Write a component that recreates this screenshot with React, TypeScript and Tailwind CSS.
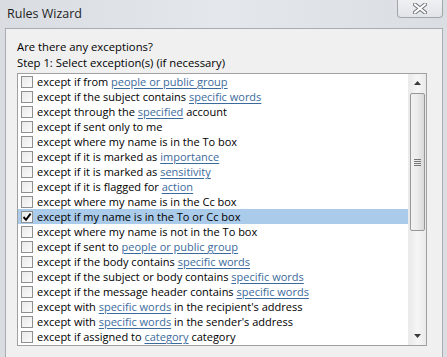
import React from 'react';

type Part = string | { link: string };

const rows: Part[][] = [
  ['except if from ', { link: 'people or public group' }],
  ['except if the subject contains ', { link: 'specific words' }],
  ['except through the ', { link: 'specified' }, ' account'],
  ['except if sent only to me'],
  ['except where my name is in the To box'],
  ['except if it is marked as ', { link: 'importance' }],
  ['except if it is marked as ', { link: 'sensitivity' }],
  ['except if it is flagged for ', { link: 'action' }],
  ['except where my name is in the Cc box'],
  ['except if my name is in the To or Cc box'],
  ['except where my name is not in the To box'],
  ['except if sent to ', { link: 'people or public group' }],
  ['except if the body contains ', { link: 'specific words' }],
  ['except if the subject or body contains ', { link: 'specific words' }],
  ['except if the message header contains ', { link: 'specific words' }],
  ['except with ', { link: 'specific words' }, " in the recipient's address"],
  ['except with ', { link: 'specific words' }, " in the sender's address"],
  ['except if assigned to ', { link: 'category' }, ' category'],
];

const CHECKED = 9;

const Checkbox: React.FC<{ checked?: boolean }> = ({ checked }) => (
  <div className="w-[12px] h-[12px] shrink-0 border border-[#8e8f8f] bg-gradient-to-br from-[#e9e9e9] to-[#fbfbfb] flex items-center justify-center">
    {checked && (
      <svg width="10" height="10" viewBox="0 0 10 10">
        <path d="M1.5 5 L4 7.8 L8.6 1.6" fill="none" stroke="#000" strokeWidth="1.9" />
      </svg>
    )}
  </div>
);

const Row: React.FC<{ parts: Part[]; index: number }> = ({ parts, index }) => (
  <div
    className={`h-[15px] flex items-center gap-[4px] pl-[3px] whitespace-nowrap text-[11px] ${
      index === CHECKED ? 'bg-[#aacbea]' : ''
    }`}
  >
    <Checkbox checked={index === CHECKED} />
    <span className="leading-[15px]">
      {parts.map((p, i) =>
        typeof p === 'string' ? (
          <span key={i}>{p}</span>
        ) : (
          <span key={i} className="text-[#3b6a9c] underline decoration-[#3b6a9c] underline-offset-[2px]">
            {p.link}
          </span>
        )
      )}
    </span>
  </div>
);

const Arrow: React.FC<{ down?: boolean }> = ({ down }) => (
  <svg width="7" height="4" viewBox="0 0 7 4">
    <path d={down ? 'M0 0 H7 L3.5 4 Z' : 'M0 4 H7 L3.5 0 Z'} fill="#3c3c3c" />
  </svg>
);

const App: React.FC = () => {
  return (
    <div className="w-[447px] h-[357px] overflow-hidden relative bg-gradient-to-r from-[#d9dde2] via-[#e4e7eb] to-[#dadee3] text-black font-['Open_Sans','Noto_Sans',sans-serif]">
      {/* Title bar */}
      <div className="h-[28px] flex items-center pl-[7px] text-[12.5px] text-[#1e1e1e]">
        Rules Wizard
      </div>
      <div className="absolute top-0 right-[4px] w-[46px] h-[18px] rounded-b-[4px] border border-t-0 border-[#a2a6ab] bg-gradient-to-b from-[#eef0f2] to-[#e2e5e8] flex items-center justify-center">
        <svg width="14" height="11" viewBox="0 0 14 11">
          <path d="M2 1.5 L12 9.5 M12 1.5 L2 9.5" stroke="#6f747a" strokeWidth="4" strokeLinecap="square" />
          <path d="M2 1.5 L12 9.5 M12 1.5 L2 9.5" stroke="#fdfdfd" strokeWidth="2" strokeLinecap="square" />
        </svg>
      </div>

      {/* Dialog body */}
      <div className="ml-[5px] mr-[4px] h-[340px] border border-[#a9adb2] bg-[#f0f0f0] pl-[11px] pr-[15px] pt-[10px] text-[11.3px]">
        <div className="leading-[16px]">Are there any exceptions?</div>
        <div className="leading-[16px]">Step 1: Select exception(s) (if necessary)</div>
        <div className="mt-[2px] h-[273px] border border-[#a0a0a0] bg-white flex">
          <div className="flex-1 overflow-hidden">
            {rows.map((r, i) => (
              <Row key={i} parts={r} index={i} />
            ))}
          </div>
          {/* Scrollbar */}
          <div className="w-[18px] flex flex-col border-l border-[#ececec] bg-gradient-to-r from-[#eaeaea] via-[#f6f6f6] to-[#eaeaea]">
            <div className="h-[18px] flex items-center justify-center">
              <Arrow />
            </div>
            <div className="flex-1 px-[1px] pt-[1px]">
              <div className="h-[138px] rounded-[2px] border border-[#979797] bg-gradient-to-r from-[#f2f2f2] via-[#ebebeb] to-[#d9d9d9] flex items-center justify-center">
                <div className="flex flex-col gap-[1px]">
                  <div className="w-[7px] h-[1px] bg-[#777]" />
                  <div className="w-[7px] h-[1px] bg-[#777]" />
                  <div className="w-[7px] h-[1px] bg-[#777]" />
                  <div className="w-[7px] h-[1px] bg-[#777]" />
                </div>
              </div>
            </div>
            <div className="h-[18px] flex items-center justify-center">
              <Arrow down />
            </div>
          </div>
        </div>
      </div>
    </div>
  );
};

export default App;
